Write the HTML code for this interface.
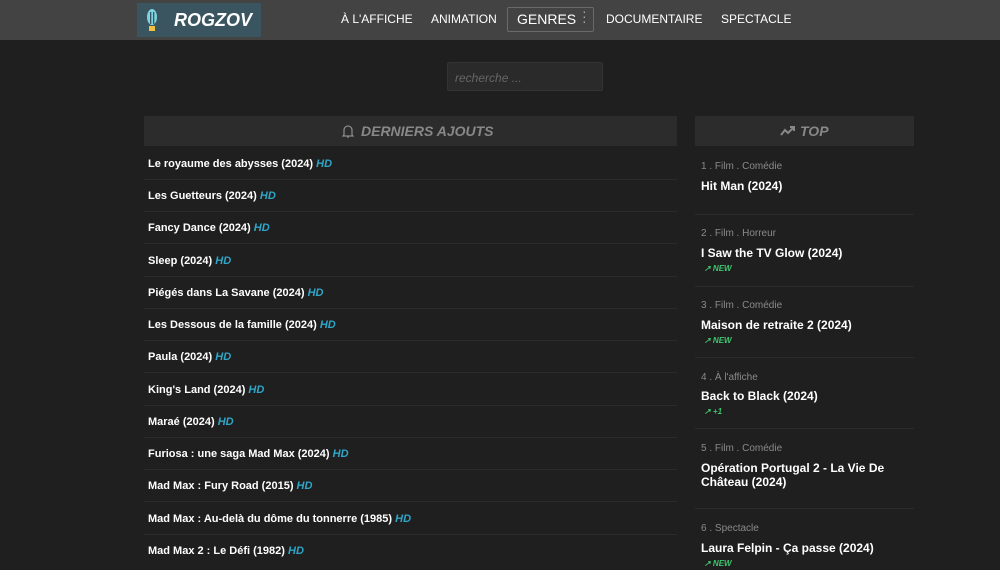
<!DOCTYPE html>
<html><head><meta charset="utf-8"><style>
body{margin:0;width:1000px;height:570px;overflow:hidden;background:#1f1f1f;font-family:"Liberation Sans",Arial,sans-serif;position:relative}
.hdr{position:absolute;left:0;top:0;width:1000px;height:40px;background:#434343}
.logo{position:absolute;left:137px;top:3px;width:124px;height:34px;background:#3a5560}
.logo span{position:absolute;left:37px;top:7px;color:#fff;font-weight:bold;font-style:italic;font-size:18px}
.nav{position:absolute;top:12px;color:#fff;font-size:12px}
.genres{position:absolute;left:507px;top:7px;width:87px;height:25px;border:1px solid #6a6a6a;border-radius:2px;box-sizing:border-box}
.search{position:absolute;left:447px;top:62px;width:156px;height:29px;background:#2a2a2a;border:1px solid #333;box-sizing:border-box;border-radius:2px;color:#666;font-style:italic;font-size:12px;padding:8px 7px}
.panel{position:absolute;top:116px;height:30px;background:#2c2c2c;color:#888;font-weight:bold;font-style:italic;font-size:14px;line-height:30px}
.row{position:absolute;left:148px;color:#fff;font-weight:bold;font-size:11px}
.hd{color:#2fa6c8;font-style:italic}
.sep{position:absolute;height:1px;background:#2b2b2b}
.meta{position:absolute;left:701px;color:#8a8a8a;font-size:10px}
.tt{position:absolute;left:701px;color:#fff;font-weight:bold;font-size:12px;line-height:14px}
.new{position:absolute;left:704px;color:#3ec46d;font-weight:bold;font-style:italic;font-size:8px}
</style></head><body>
<div class="hdr"></div>
<div class="logo"><svg style="position:absolute;left:9px;top:6px" width="12" height="24" viewBox="0 0 12 24"><ellipse cx="6" cy="8" rx="5" ry="8" fill="#7dd3e0"/><rect x="4" y="3" width="1.3" height="12" fill="#3a5560"/><rect x="7" y="3" width="1.3" height="12" fill="#3a5560"/><rect x="3" y="17" width="6" height="5" fill="#f0c040"/></svg><span>ROGZOV</span></div>
<div class="nav" style="left:341px">À L'AFFICHE</div>
<div class="nav" style="left:431px">ANIMATION</div>
<div class="genres"></div>
<div class="nav" style="left:517px;font-size:14px;top:11px">GENRES</div>
<div class="nav" style="left:582px;color:#aaa;top:9px;font-size:14px;line-height:5px">·<br>·<br>·</div>
<div class="nav" style="left:606px">DOCUMENTAIRE</div>
<div class="nav" style="left:721px">SPECTACLE</div>
<div class="search">recherche ...</div>
<div class="panel" style="left:144px;width:533px"><svg style="position:absolute;left:198px;top:8px" width="12" height="15" viewBox="0 0 12 15"><path d="M2 11V6a4 4 0 0 1 8 0v5l1 1H1z M5 13h2" fill="none" stroke="#888" stroke-width="1.3"/></svg><span style="position:absolute;left:217px">DERNIERS AJOUTS</span></div>
<div class="panel" style="left:695px;width:219px"><svg style="position:absolute;left:85px;top:10px" width="16" height="10" viewBox="0 0 16 10"><path d="M1 9l4-5 3 3 6-6M10 1h4v4" fill="none" stroke="#888" stroke-width="2"/></svg><span style="position:absolute;left:105px">TOP</span></div>

<div class="row" style="top:158px">Le royaume des abysses (2024) <span class="hd">HD</span></div>
<div class="row" style="top:190px">Les Guetteurs (2024) <span class="hd">HD</span></div>
<div class="row" style="top:222px">Fancy Dance (2024) <span class="hd">HD</span></div>
<div class="row" style="top:255px">Sleep (2024) <span class="hd">HD</span></div>
<div class="row" style="top:287px">Piégés dans La Savane (2024) <span class="hd">HD</span></div>
<div class="row" style="top:319px">Les Dessous de la famille (2024) <span class="hd">HD</span></div>
<div class="row" style="top:351px">Paula (2024) <span class="hd">HD</span></div>
<div class="row" style="top:384px">King's Land (2024) <span class="hd">HD</span></div>
<div class="row" style="top:416px">Maraé (2024) <span class="hd">HD</span></div>
<div class="row" style="top:448px">Furiosa : une saga Mad Max (2024) <span class="hd">HD</span></div>
<div class="row" style="top:480px">Mad Max : Fury Road (2015) <span class="hd">HD</span></div>
<div class="row" style="top:513px">Mad Max : Au-delà du dôme du tonnerre (1985) <span class="hd">HD</span></div>
<div class="row" style="top:545px">Mad Max 2 : Le Défi (1982) <span class="hd">HD</span></div>
<div class="sep" style="left:144px;width:533px;top:179px"></div>
<div class="sep" style="left:144px;width:533px;top:211px"></div>
<div class="sep" style="left:144px;width:533px;top:243px"></div>
<div class="sep" style="left:144px;width:533px;top:276px"></div>
<div class="sep" style="left:144px;width:533px;top:308px"></div>
<div class="sep" style="left:144px;width:533px;top:340px"></div>
<div class="sep" style="left:144px;width:533px;top:372px"></div>
<div class="sep" style="left:144px;width:533px;top:405px"></div>
<div class="sep" style="left:144px;width:533px;top:437px"></div>
<div class="sep" style="left:144px;width:533px;top:469px"></div>
<div class="sep" style="left:144px;width:533px;top:501px"></div>
<div class="sep" style="left:144px;width:533px;top:534px"></div>

<div class="meta" style="top:161px">1 . Film . Comédie</div>
<div class="tt" style="top:179px">Hit Man (2024)</div>
<div class="sep" style="left:695px;width:219px;top:214px"></div>
<div class="meta" style="top:228px">2 . Film . Horreur</div>
<div class="tt" style="top:246px">I Saw the TV Glow (2024)</div>
<div class="new" style="top:264px">↗ NEW</div>
<div class="sep" style="left:695px;width:219px;top:286px"></div>
<div class="meta" style="top:300px">3 . Film . Comédie</div>
<div class="tt" style="top:318px">Maison de retraite 2 (2024)</div>
<div class="new" style="top:336px">↗ NEW</div>
<div class="sep" style="left:695px;width:219px;top:357px"></div>
<div class="meta" style="top:372px">4 . À l'affiche</div>
<div class="tt" style="top:389px">Back to Black (2024)</div>
<div class="new" style="top:407px">↗ +1</div>
<div class="sep" style="left:695px;width:219px;top:428px"></div>
<div class="meta" style="top:443px">5 . Film . Comédie</div>
<div class="tt" style="top:461px">Opération Portugal 2 - La Vie De<br>Château (2024)</div>
<div class="sep" style="left:695px;width:219px;top:508px"></div>
<div class="meta" style="top:523px">6 . Spectacle</div>
<div class="tt" style="top:541px">Laura Felpin - Ça passe (2024)</div>
<div class="new" style="top:559px">↗ NEW</div>
</body></html>
